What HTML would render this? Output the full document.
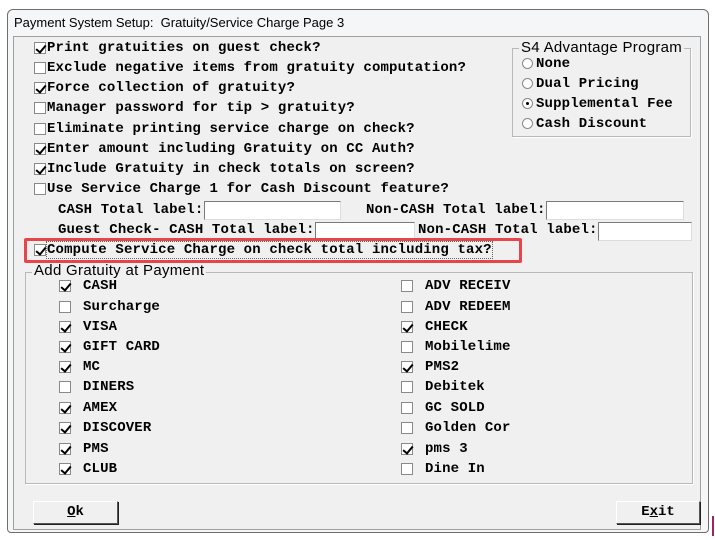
<!DOCTYPE html>
<html><head><style>
*{margin:0;padding:0;box-sizing:border-box}
body{width:715px;height:540px;background:#fff;position:relative;overflow:hidden;font-family:"Liberation Mono",monospace}
.win{position:absolute;left:7px;top:9px;width:702px;height:524px;border:1px solid #6e6e6e;border-radius:6px 6px 4px 4px;background:#f4f6f8}
.title{position:absolute;left:14px;top:15px;font:13px "Liberation Sans",sans-serif;color:#000}
.panel{position:absolute;left:13px;top:36px;width:688px;height:494px;background:#f0f0f0;border:1px solid #a0a0a0}
.t{position:absolute;font-weight:bold;font-size:14px;letter-spacing:0.15px;color:#000;white-space:nowrap;line-height:16px}
.cb{position:absolute;width:12px;height:12px;border:1px solid #8a8a8a;background:#fff}
.cb.c::after{content:"";position:absolute;left:3px;top:0px;width:4px;height:8px;border:solid #000;border-width:0 2px 2px 0;transform:rotate(40deg)}
.inp{position:absolute;background:#fff;border:1px solid #7a7a7a;border-right-color:#ddd;border-bottom-color:#ddd;height:19px}
.grp{position:absolute;border:1px solid #b8b8b8;box-shadow:1px 1px 0 #fff}
.gl{position:absolute;font:15px "Liberation Sans",sans-serif;background:#f0f0f0;padding:0 2px;white-space:nowrap;line-height:16px;letter-spacing:0.3px}
.rb{position:absolute;width:11px;height:11px;border-radius:50%;border:1px solid #888;background:#fff}
.rb.s::after{content:"";position:absolute;left:3px;top:3px;width:3px;height:3px;border-radius:50%;background:#000}
.btn{position:absolute;height:23px;background:#f0f0f0;border:1px solid #fff;border-right-color:#555;border-bottom-color:#555;box-shadow:1px 1px 0 #222;font-weight:bold;font-size:14px;text-align:center;line-height:21px}
</style></head><body>
<div class="win"></div>
<div class="title">Payment System Setup:&nbsp; Gratuity/Service Charge Page 3</div>
<div class="panel"></div>

<div class="cb c" style="left:34px;top:42px"></div><div class="t" style="left:47px;top:40px">Print gratuities on guest check?</div>
<div class="cb" style="left:34px;top:62px"></div><div class="t" style="left:47px;top:60px">Exclude negative items from gratuity computation?</div>
<div class="cb c" style="left:34px;top:82px"></div><div class="t" style="left:47px;top:80px">Force collection of gratuity?</div>
<div class="cb" style="left:34px;top:102px"></div><div class="t" style="left:47px;top:100px">Manager password for tip &gt; gratuity?</div>
<div class="cb" style="left:34px;top:123px"></div><div class="t" style="left:47px;top:121px">Eliminate printing service charge on check?</div>
<div class="cb c" style="left:34px;top:143px"></div><div class="t" style="left:47px;top:141px">Enter amount including Gratuity on CC Auth?</div>
<div class="cb c" style="left:34px;top:163px"></div><div class="t" style="left:47px;top:161px">Include Gratuity in check totals on screen?</div>
<div class="cb" style="left:34px;top:183px"></div><div class="t" style="left:47px;top:181px">Use Service Charge 1 for Cash Discount feature?</div>

<div class="t" style="left:58px;top:202px">CASH Total label:</div><div class="inp" style="left:204px;top:201px;width:137px"></div>
<div class="t" style="left:366px;top:202px">Non-CASH Total label:</div><div class="inp" style="left:546px;top:201px;width:138px"></div>
<div class="t" style="left:58px;top:222px">Guest Check- CASH Total label:</div><div class="inp" style="left:315px;top:222px;width:100px"></div>
<div class="t" style="left:418px;top:222px">Non-CASH Total label:</div><div class="inp" style="left:598px;top:222px;width:94px"></div>

<div class="cb c" style="left:34px;top:244px"></div><div class="t" style="left:47px;top:242px;outline:1px dotted #666">Compute Service Charge on check total including tax?</div>
<div style="position:absolute;left:24px;top:238px;width:498px;height:25px;border:3px solid #e8454a;border-radius:2px"></div>

<div class="grp" style="left:512px;top:48px;width:179px;height:89px"></div>
<div class="gl" style="left:519px;top:40px">S4 Advantage Program</div>
<div class="rb" style="left:522px;top:58px"></div><div class="t" style="left:536px;top:56px">None</div>
<div class="rb" style="left:522px;top:78px"></div><div class="t" style="left:536px;top:76px">Dual Pricing</div>
<div class="rb s" style="left:522px;top:98px"></div><div class="t" style="left:536px;top:96px">Supplemental Fee</div>
<div class="rb" style="left:522px;top:118px"></div><div class="t" style="left:536px;top:116px">Cash Discount</div>

<div class="grp" style="left:25px;top:272px;width:668px;height:212px"></div>
<div class="gl" style="left:32px;top:263px">Add Gratuity at Payment</div>

<div class="cb c" style="left:59px;top:280px"></div><div class="t" style="left:83px;top:278px">CASH</div>
<div class="cb" style="left:59px;top:301px"></div><div class="t" style="left:83px;top:299px">Surcharge</div>
<div class="cb c" style="left:59px;top:321px"></div><div class="t" style="left:83px;top:319px">VISA</div>
<div class="cb c" style="left:59px;top:341px"></div><div class="t" style="left:83px;top:339px">GIFT CARD</div>
<div class="cb c" style="left:59px;top:361px"></div><div class="t" style="left:83px;top:359px">MC</div>
<div class="cb" style="left:59px;top:381px"></div><div class="t" style="left:83px;top:379px">DINERS</div>
<div class="cb c" style="left:59px;top:402px"></div><div class="t" style="left:83px;top:400px">AMEX</div>
<div class="cb c" style="left:59px;top:422px"></div><div class="t" style="left:83px;top:420px">DISCOVER</div>
<div class="cb c" style="left:59px;top:443px"></div><div class="t" style="left:83px;top:441px">PMS</div>
<div class="cb c" style="left:59px;top:463px"></div><div class="t" style="left:83px;top:461px">CLUB</div>

<div class="cb" style="left:401px;top:280px"></div><div class="t" style="left:425px;top:278px">ADV RECEIV</div>
<div class="cb" style="left:401px;top:301px"></div><div class="t" style="left:425px;top:299px">ADV REDEEM</div>
<div class="cb c" style="left:401px;top:321px"></div><div class="t" style="left:425px;top:319px">CHECK</div>
<div class="cb" style="left:401px;top:341px"></div><div class="t" style="left:425px;top:339px">Mobilelime</div>
<div class="cb c" style="left:401px;top:361px"></div><div class="t" style="left:425px;top:359px">PMS2</div>
<div class="cb" style="left:401px;top:381px"></div><div class="t" style="left:425px;top:379px">Debitek</div>
<div class="cb" style="left:401px;top:402px"></div><div class="t" style="left:425px;top:400px">GC SOLD</div>
<div class="cb" style="left:401px;top:422px"></div><div class="t" style="left:425px;top:420px">Golden Cor</div>
<div class="cb c" style="left:401px;top:443px"></div><div class="t" style="left:425px;top:441px">pms 3</div>
<div class="cb" style="left:401px;top:463px"></div><div class="t" style="left:425px;top:461px">Dine In</div>

<div class="btn" style="left:33px;top:501px;width:85px"><u>O</u>k</div>
<div class="btn" style="left:616px;top:501px;width:84px">E<u>x</u>it</div>
<div style="position:absolute;left:712px;top:516px;width:2px;height:20px;background:#a0206a"></div>
</body></html>
